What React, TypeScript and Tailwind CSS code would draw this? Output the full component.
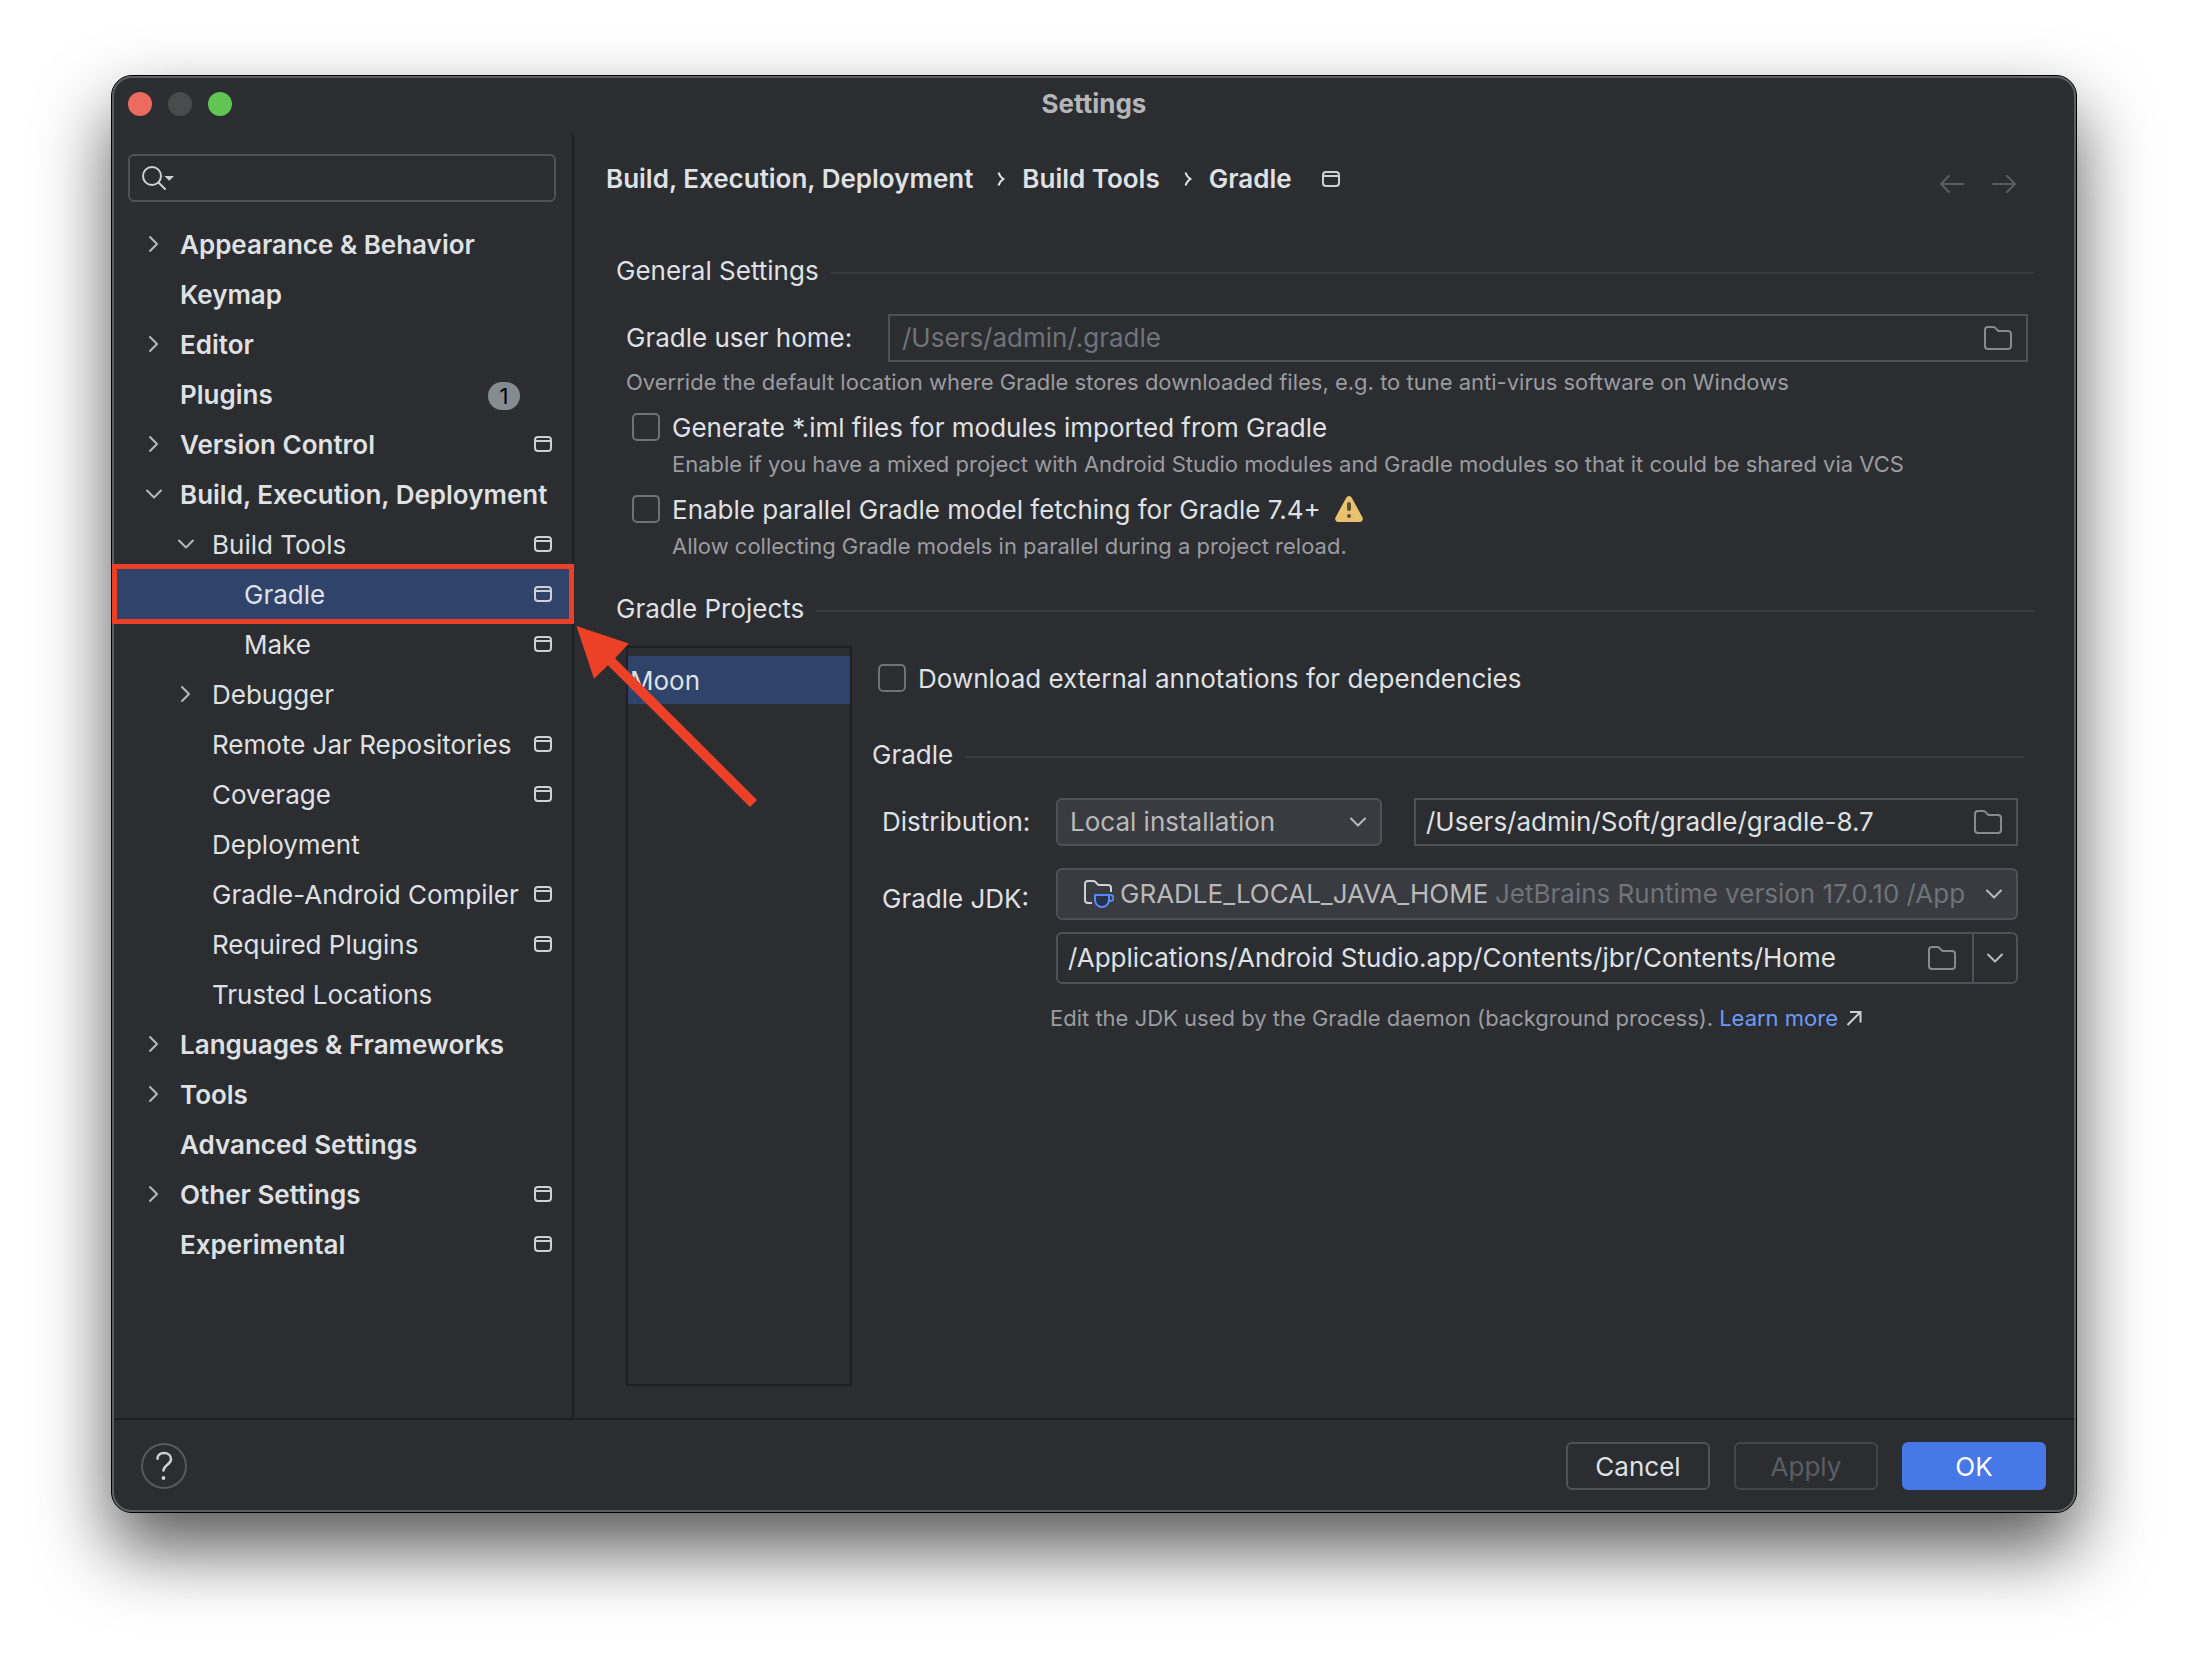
import type { ReactNode } from "react";
import { clsx } from "clsx";

type TreeItem = {
  label: string;
  level: 0 | 1 | 2;
  state?: "open" | "closed";
  project?: boolean;
  badge?: number;
  selected?: boolean;
};

const treeItems: TreeItem[] = [
  { label: "Appearance & Behavior", level: 0, state: "closed" },
  { label: "Keymap", level: 0 },
  { label: "Editor", level: 0, state: "closed" },
  { label: "Plugins", level: 0, badge: 1 },
  { label: "Version Control", level: 0, state: "closed", project: true },
  { label: "Build, Execution, Deployment", level: 0, state: "open" },
  { label: "Build Tools", level: 1, state: "open", project: true },
  { label: "Gradle", level: 2, project: true, selected: true },
  { label: "Make", level: 2, project: true },
  { label: "Debugger", level: 1, state: "closed" },
  { label: "Remote Jar Repositories", level: 1, project: true },
  { label: "Coverage", level: 1, project: true },
  { label: "Deployment", level: 1 },
  { label: "Gradle-Android Compiler", level: 1, project: true },
  { label: "Required Plugins", level: 1, project: true },
  { label: "Trusted Locations", level: 1 },
  { label: "Languages & Frameworks", level: 0, state: "closed" },
  { label: "Tools", level: 0, state: "closed" },
  { label: "Advanced Settings", level: 0 },
  { label: "Other Settings", level: 0, state: "closed", project: true },
  { label: "Experimental", level: 0, project: true }
];

const indent = ["pl-6", "pl-14", "pl-22"];

function ChevronIcon({ open = true, className }: { open?: boolean; className?: string }) {
  return (
    <svg viewBox="0 0 32 32" fill="none" stroke="currentColor" strokeWidth="2" strokeLinecap="round" strokeLinejoin="round" className={clsx("size-8 shrink-0", className)} aria-hidden="true">
      <path d={open ? "M9 12.5l7 7 7-7" : "M12 9l7 7-7 7"} />
    </svg>
  );
}

function ProjectIcon() {
  return (
    <svg viewBox="0 0 18 16" fill="none" stroke="#ced0d6" strokeWidth="2" className="h-4 w-[18px] shrink-0" aria-hidden="true">
      <rect x="1" y="1" width="16" height="14" rx="3" />
      <path d="M1 5h16" />
    </svg>
  );
}

function FolderIcon() {
  return (
    <svg viewBox="0 0 28 24" fill="none" stroke="#868a91" strokeWidth="2" strokeLinejoin="round" className="h-6 w-7" aria-hidden="true">
      <path d="M1 4a3 3 0 0 1 3-3h5.2a3 3 0 0 1 2.1.9L14.4 5H24a3 3 0 0 1 3 3v12a3 3 0 0 1-3 3H4a3 3 0 0 1-3-3z" />
    </svg>
  );
}

function JdkIcon() {
  return (
    <svg viewBox="0 0 30 28" fill="none" strokeWidth="2" className="h-7 w-[30px] shrink-0" aria-hidden="true">
      <path d="M8 23H4a3 3 0 0 1-3-3V4a3 3 0 0 1 3-3h5.2a3 3 0 0 1 2.1.9L14.4 5H24a3 3 0 0 1 3 3v4" stroke="#ced0d6" />
      <path d="M11 15h14v5a7 7 0 0 1-14 0z" fill="#25324d" stroke="#548af7" />
      <path d="M25 15h1.5a2.5 2.5 0 0 1 0 6H25" stroke="#548af7" />
    </svg>
  );
}

function WarningIcon() {
  return (
    <svg viewBox="0 0 28 26" className="h-[26px] w-7" role="img" aria-label="Warning">
      <path d="M11.2 1.7a3.2 3.2 0 0 1 5.6 0l10.6 19.5a3.2 3.2 0 0 1-2.8 4.8H3.4a3.2 3.2 0 0 1-2.8-4.8z" fill="#e8c26c" />
      <rect x="12" y="6" width="4" height="9" rx="2" fill="#5e4d33" />
      <circle cx="14" cy="20" r="2" fill="#5e4d33" />
    </svg>
  );
}

function Legend({ children }: { children: ReactNode }) {
  return (
    <div className="flex items-center gap-3">
      <h2>{children}</h2>
      <div className="mt-1 h-0.5 flex-1 bg-[#393b40]" />
    </div>
  );
}

function CheckRow({ id, label, children }: { id: string; label: string; children?: ReactNode }) {
  return (
    <div className="flex items-center">
      <input id={id} type="checkbox" className="mr-3 size-7 shrink-0 appearance-none rounded-[5px] border-2 border-[#6f7177]" />
      <label htmlFor={id} className="pt-0.5">{label}</label>
      {children}
    </div>
  );
}

function Sidebar() {
  return (
    <aside className="relative z-10 w-[460px] shrink-0 border-r-2 border-[#1e1f22] pt-5">
      <label className="mr-4 ml-3.5 flex h-12 items-center rounded-md border-2 border-[#4e5157] pl-3">
        <svg viewBox="0 0 32 24" fill="none" className="h-6 w-8" aria-hidden="true">
          <circle cx="10" cy="10" r="9" stroke="#ced0d6" strokeWidth="2" />
          <path d="M16.5 16.5L23 23" stroke="#ced0d6" strokeWidth="2" strokeLinecap="round" />
          <path d="M22.5 10H32l-4.75 4.75z" fill="#ced0d6" />
        </svg>
        <input type="search" aria-label="Search settings" className="min-w-0 flex-1 bg-transparent px-2 outline-none" />
      </label>
      <ul className="mt-[17px]">
        {treeItems.map((item) => (
          <li key={item.label} className={clsx("relative", item.selected && "bg-[#30436b]")}>
            <button type="button" className={clsx("flex h-[50px] w-full items-center pr-5 text-left whitespace-nowrap", indent[item.level], item.level === 0 && "font-semibold")}>
              {item.state ? <ChevronIcon open={item.state === "open"} className="text-[#b4b8bf]" /> : <span className="w-8 shrink-0" />}
              <span className="ml-2.5 flex-1 pt-0.5">{item.label}</span>
              {item.badge && <span className="mt-1 mr-8 flex h-7 w-8 items-center justify-center rounded-full bg-[#868a91] text-[22px] font-normal text-black">{item.badge}</span>}
              {item.project && <ProjectIcon />}
            </button>
            {item.selected && (
              <>
                <div className="pointer-events-none absolute -inset-x-0.5 -inset-y-[5px] border-5 border-[#ec4127]" />
                <svg viewBox="0 0 184 184" fill="#ec4127" className="pointer-events-none absolute top-[55px] left-full ml-0.5 size-46" aria-hidden="true">
                  <path d="M2.5 2L54.7 19.5 41 34.3 183 176 176 183 34 41.3 20 54.7z" />
                </svg>
              </>
            )}
          </li>
        ))}
      </ul>
    </aside>
  );
}

function Separator() {
  return (
    <svg viewBox="0 0 8 16" fill="none" stroke="#dfe1e5" strokeWidth="2" className="mr-[17px] ml-6 h-4 w-2" aria-hidden="true">
      <path d="M1.5 1.5Q3 6 6.5 8 3 10 1.5 14.5" />
    </svg>
  );
}

function Breadcrumbs() {
  return (
    <header className="flex items-center pr-[18px] pl-8">
      <nav className="flex flex-1 items-center font-semibold" aria-label="Breadcrumb">
        <a href="#build">Build, Execution, Deployment</a>
        <Separator />
        <a href="#tools">Build Tools</a>
        <Separator />
        <a href="#gradle" className="mr-[30px]">Gradle</a>
        <ProjectIcon />
      </nav>
      <div className="mt-2.5 mr-10 flex gap-7 text-[#5a5d63]">
        <button type="button" aria-label="Back">
          <svg viewBox="0 0 24 18" fill="none" stroke="currentColor" strokeWidth="2" strokeLinecap="round" strokeLinejoin="round" className="h-[18px] w-6">
            <path d="M9 1L1 9l8 8M1 9h22" />
          </svg>
        </button>
        <button type="button" aria-label="Forward">
          <svg viewBox="0 0 24 18" fill="none" stroke="currentColor" strokeWidth="2" strokeLinecap="round" strokeLinejoin="round" className="h-[18px] w-6">
            <path d="M15 1l8 8-8 8M23 9H1" />
          </svg>
        </button>
      </div>
    </header>
  );
}

function GeneralSettings() {
  return (
    <section className="mt-15 pr-10 pl-[42px]">
      <Legend>General Settings</Legend>
      <div className="mt-[27px] pr-1.5 pl-2.5">
        <div className="flex items-center">
          <label htmlFor="user-home" className="w-[262px] shrink-0">Gradle user home:</label>
          <div className="flex h-12 flex-1 items-center border-2 border-[#4e5157] pr-3.5 pl-3">
            <input id="user-home" placeholder="/Users/admin/.gradle" className="min-w-0 flex-1 bg-transparent outline-none placeholder:text-[#6f737a]" />
            <button type="button" aria-label="Browse for Gradle user home">
              <FolderIcon />
            </button>
          </div>
        </div>
        <p className="mt-1.5 text-[22px] leading-7 text-[#9a9ca1]">Override the default location where Gradle stores downloaded files, e.g. to tune anti-virus software on Windows</p>
        <div className="mt-3.5 pl-1.5">
          <CheckRow id="iml" label="Generate *.iml files for modules imported from Gradle" />
          <p className="mt-1.5 pl-10 text-[22px] leading-7 text-[#9a9ca1]">Enable if you have a mixed project with Android Studio modules and Gradle modules so that it could be shared via VCS</p>
        </div>
        <div className="mt-3.5 pl-1.5">
          <CheckRow id="parallel" label="Enable parallel Gradle model fetching for Gradle 7.4+">
            <span className="ml-3.5">
              <WarningIcon />
            </span>
          </CheckRow>
          <p className="mt-1.5 pl-10 text-[22px] leading-7 text-[#9a9ca1]">Allow collecting Gradle models in parallel during a project reload.</p>
        </div>
      </div>
    </section>
  );
}

function ProjectOptions() {
  return (
    <div className="min-w-0 flex-1 pt-[15px]">
      <div className="pl-1.5">
        <CheckRow id="annotations" label="Download external annotations for dependencies" />
      </div>
      <div className="mt-11">
        <Legend>Gradle</Legend>
      </div>
      <div className="mt-[27px] pr-1.5 pl-2.5">
        <div className="flex items-center">
          <label htmlFor="distribution" className="w-[174px] shrink-0">Distribution:</label>
          <div className="relative mr-8 w-[326px] text-[#b8b9bb]">
            <select id="distribution" className="h-12 w-full appearance-none rounded-md border-2 border-[#4e5157] bg-[#393b40] pl-3 outline-none">
              <option>Local installation</option>
            </select>
            <ChevronIcon className="pointer-events-none absolute top-2 right-2" />
          </div>
          <div className="flex h-12 min-w-0 flex-1 items-center border-2 border-[#4e5157] pr-3.5 pl-2.5">
            <input aria-label="Gradle installation path" defaultValue="/Users/admin/Soft/gradle/gradle-8.7" className="min-w-0 flex-1 bg-transparent outline-none" />
            <button type="button" aria-label="Browse for Gradle installation">
              <FolderIcon />
            </button>
          </div>
        </div>
        <div className="mt-[22px] flex items-end">
          <label htmlFor="jdk" className="w-[174px] shrink-0 pb-[5px]">Gradle JDK:</label>
          <div className="flex h-13 min-w-0 flex-1 items-center rounded-md border-2 border-[#4e5157] bg-[#393b40] pr-1.5 pl-[26px] text-[#b8b9bb]">
            <JdkIcon />
            <select id="jdk" className="ml-1.5 shrink-0 appearance-none bg-transparent outline-none">
              <option>GRADLE_LOCAL_JAVA_HOME</option>
            </select>
            <span className="ml-1.5 min-w-0 flex-1 overflow-hidden whitespace-nowrap text-[#6f737a]">JetBrains Runtime version 17.0.10 /App</span>
            <ChevronIcon />
          </div>
        </div>
        <div className="mt-3 ml-[174px] flex h-13 items-center rounded-md border-2 border-[#4e5157] pl-2.5">
          <input aria-label="Gradle JDK path" defaultValue="/Applications/Android Studio.app/Contents/jbr/Contents/Home" className="min-w-0 flex-1 bg-transparent outline-none" />
          <button type="button" aria-label="Browse for JDK" className="mr-4">
            <FolderIcon />
          </button>
          <button type="button" aria-label="Recent JDK paths" className="flex h-full items-center border-l-2 border-[#4e5157] px-[5px] text-[#b8b9bb]">
            <ChevronIcon />
          </button>
        </div>
        <p className="mt-5 ml-[168px] flex items-center text-[22px] leading-7 text-[#9a9ca1]">
          Edit the JDK used by the Gradle daemon (background process).
          <a href="#learn-more" className="ml-1.5 flex items-center gap-2 text-[#6b9bfa]">
            Learn more
            <svg viewBox="0 0 16 16" fill="none" stroke="#ced0d6" strokeWidth="2" className="size-4" aria-hidden="true">
              <path d="M4 2h10.5v10.5M14 2.5L1.5 15" />
            </svg>
          </a>
        </p>
      </div>
    </div>
  );
}

function GradleProjects() {
  return (
    <section className="mt-[33px] flex flex-1 flex-col pb-8 pl-[42px]">
      <div className="pr-10">
        <Legend>Gradle Projects</Legend>
      </div>
      <div className="mt-[21px] flex flex-1 gap-5 pr-[50px] pl-2.5">
        <ul className="w-[226px] shrink-0 border-2 border-[#1e1f22] pt-2">
          <li className="flex h-12 items-center bg-[#30436b] pt-0.5 pl-0.5">Moon</li>
        </ul>
        <ProjectOptions />
      </div>
    </section>
  );
}

function Footer() {
  return (
    <footer className="flex h-23 shrink-0 items-center gap-6 border-t-2 border-[#1e1f22] pt-0.5 pr-7 pl-[27px]">
      <button type="button" aria-label="Help" className="mr-auto">
        <svg viewBox="0 0 46 46" fill="none" className="size-[46px]">
          <circle cx="23" cy="23" r="22" stroke="#57595e" strokeWidth="2" />
          <path d="M16.5 15.8C16.5 12.2 19.2 10 23 10s7 2.300 7 6.200c0 5.300-7.300 5.800-7.500 11.300" stroke="#ced0d6" strokeWidth="2.5" strokeLinecap="round" />
          <circle cx="22.5" cy="35" r="1.9" fill="#ced0d6" />
        </svg>
      </button>
      <button type="button" className="h-12 w-36 rounded-md border-2 border-[#4e5157] pt-0.5">Cancel</button>
      <button type="button" disabled className="h-12 w-36 rounded-md border-2 border-[#43454a] pt-0.5 text-[#5a5d63]">Apply</button>
      <button type="button" className="h-12 w-36 rounded-md bg-[#4678e8] pt-0.5 text-white">OK</button>
    </footer>
  );
}

export default function App() {
  return (
    <div className="flex min-h-screen bg-white px-[111px] pt-[75px] pb-[147px] font-['Inter',sans-serif] text-[26px] leading-8 text-[#dfe1e5]">
      <div className="flex flex-1 rounded-[21px] border border-black bg-[#2c2d30] shadow-[0_36px_72px_rgba(0,0,0,0.66)]">
        <div className="flex min-w-0 flex-1 flex-col rounded-[20px] border-2 border-[#5e5f61]">
          <div className="grid h-14 grid-cols-3 items-center px-3.5 pb-1">
            <div className="flex gap-4">
              <button type="button" aria-label="Close" className="size-6 rounded-full bg-[#ec6a5e]" />
              <button type="button" aria-label="Minimize" className="size-6 rounded-full bg-[#4a4b4d]" />
              <button type="button" aria-label="Zoom" className="size-6 rounded-full bg-[#61c554]" />
            </div>
            <h1 className="text-center font-bold text-[#b4b6b9]">Settings</h1>
          </div>
          <div className="flex flex-1">
            <Sidebar />
            <main className="flex min-w-0 flex-1 flex-col pt-[29px]">
              <Breadcrumbs />
              <GeneralSettings />
              <GradleProjects />
            </main>
          </div>
          <Footer />
        </div>
      </div>
    </div>
  );
}
